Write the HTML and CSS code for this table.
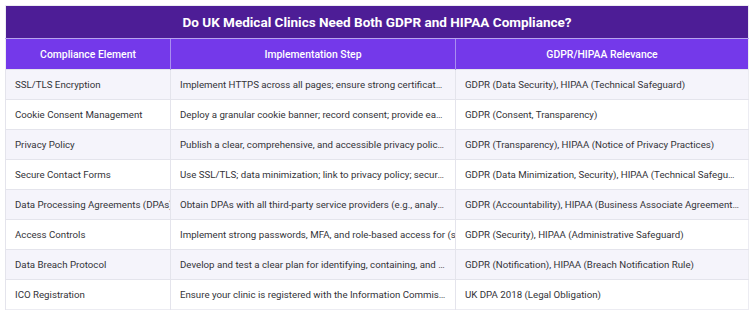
FILE: index.html
```html
<!DOCTYPE html>
<html>
<head>
<meta charset="utf-8">
<link rel="stylesheet" href="styles.css">
</head>
<body>
<div class="wrap">
<table class="grid">
<colgroup><col class="c1"><col class="c2"><col class="c3"></colgroup>
<thead>
<tr><th class="title" colspan="3">Do UK Medical Clinics Need Both GDPR and HIPAA Compliance?</th></tr>
<tr class="head"><th>Compliance Element</th><th>Implementation Step</th><th>GDPR/HIPAA Relevance</th></tr>
</thead>
<tbody>
<tr><td>SSL/TLS Encryption</td><td>Implement HTTPS across all pages; ensure strong certificate management and renewal</td><td>GDPR (Data Security), HIPAA (Technical Safeguard)</td></tr>
<tr><td>Cookie Consent Management</td><td>Deploy a granular cookie banner; record consent; provide easy withdrawal</td><td>GDPR (Consent, Transparency)</td></tr>
<tr><td>Privacy Policy</td><td>Publish a clear, comprehensive, and accessible privacy policy for patients</td><td>GDPR (Transparency), HIPAA (Notice of Privacy Practices)</td></tr>
<tr><td>Secure Contact Forms</td><td>Use SSL/TLS; data minimization; link to privacy policy; secure storage</td><td>GDPR (Data Minimization, Security), HIPAA (Technical Safeguard)</td></tr>
<tr><td class="clip">Data Processing Agreements (DPAs)</td><td>Obtain DPAs with all third-party service providers (e.g., analytics, hosting)</td><td>GDPR (Accountability), HIPAA (Business Associate Agreements)</td></tr>
<tr><td>Access Controls</td><td class="clip">Implement strong passwords, MFA, and role-based access for (staff)</td><td>GDPR (Security), HIPAA (Administrative Safeguard)</td></tr>
<tr><td>Data Breach Protocol</td><td>Develop and test a clear plan for identifying, containing, and reporting breaches</td><td>GDPR (Notification), HIPAA (Breach Notification Rule)</td></tr>
<tr><td>ICO Registration</td><td>Ensure your clinic is registered with the Information Commissioner's Office</td><td>UK DPA 2018 (Legal Obligation)</td></tr>
</tbody>
</table>
</div>
</body>
</html>
```
FILE: styles.css
```css
html, body { margin: 0; padding: 0; background: #ffffff; }
body { font-family: Roboto, "Liberation Sans", Arial, sans-serif; }
.wrap {
  padding: 5px 0 0 5px;
  width: 744px;
}
.grid {
  width: 743px;
  border-collapse: collapse;
  table-layout: fixed;
  border: 1px solid #ececf2;
}
.c1 { width: 165px; }
.c2 { width: 285px; }
.c3 { width: 293px; }
.title {
  background: #4d1d96;
  color: #ffffff;
  font-size: 13.5px;
  font-weight: 700;
  height: 32px;
  padding: 0;
  text-align: center;
  border-bottom: 1px solid #b9a3ee;
}
.head th {
  background: #7439ea;
  color: #ffffff;
  font-size: 10.4px;
  font-weight: 500;
  height: 30px;
  padding: 0 9px;
  text-align: center;
  border-left: 1px solid #a98ef0;
}
.head th:first-child { border-left: none; }
td {
  height: 29px;
  padding: 0 9px;
  font-size: 9.7px;
  color: #333338;
  white-space: nowrap;
  overflow: hidden;
  text-overflow: ellipsis;
  border-top: 1px solid #e4e4ec;
  border-left: 1px solid #e4e4ec;
}
td.clip { text-overflow: clip; }
tbody tr:nth-child(odd) td { background: #f5f4fb; }
tbody tr:nth-child(even) td { background: #ffffff; }
```
